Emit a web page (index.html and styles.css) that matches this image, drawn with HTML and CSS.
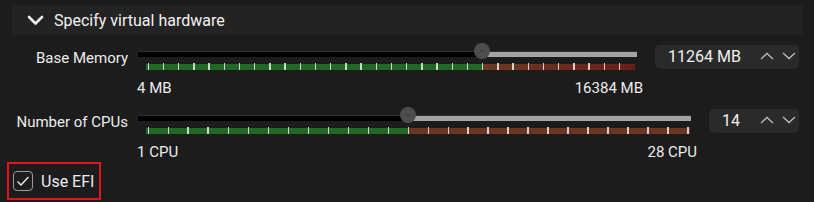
FILE: index.html
```html
<!DOCTYPE html>
<html lang="en">
<head>
    <meta charset="UTF-8">
    <title>Virtual hardware</title>
    <link rel="stylesheet" href="styles.css">
</head>
<body>
    <div class="section-head">
        <svg class="chevron" width="17" height="11" viewBox="0 0 17 11">
            <path d="M2 2 L8.5 8.5 L15 2" fill="none" stroke="#f2f2f2" stroke-width="2.6" stroke-linecap="round" stroke-linejoin="round"/>
        </svg>
        <span>Specify virtual hardware</span>
    </div>

    <div class="setting">
        <label class="setting-label">Base Memory</label>
        <div class="slider slider-mem" style="--pos: 344px">
            <div class="track"></div>
            <div class="thumb"></div>
            <div class="scale"></div>
        </div>
        <div class="spin spin-wide">
            <span class="spin-value">11264 MB</span>
            <span class="spin-arrows">
                <svg width="14" height="8" viewBox="0 0 14 8"><path d="M1 7 L7 1.5 L13 7" fill="none" stroke="#bdbdbd" stroke-width="1.3"/></svg>
                <svg width="14" height="8" viewBox="0 0 14 8"><path d="M1 1 L7 6.5 L13 1" fill="none" stroke="#bdbdbd" stroke-width="1.3"/></svg>
            </span>
        </div>
        <div class="range"><span>4 MB</span><span>16384 MB</span></div>
    </div>

    <div class="setting">
        <label class="setting-label">Number of CPUs</label>
        <div class="slider slider-cpu" style="--pos: 270px">
            <div class="track"></div>
            <div class="thumb"></div>
            <div class="scale"></div>
        </div>
        <div class="spin spin-narrow">
            <span class="spin-value">14</span>
            <span class="spin-arrows">
                <svg width="14" height="8" viewBox="0 0 14 8"><path d="M1 7 L7 1.5 L13 7" fill="none" stroke="#bdbdbd" stroke-width="1.3"/></svg>
                <svg width="14" height="8" viewBox="0 0 14 8"><path d="M1 1 L7 6.5 L13 1" fill="none" stroke="#bdbdbd" stroke-width="1.3"/></svg>
            </span>
        </div>
        <div class="range"><span>1 CPU</span><span>28 CPU</span></div>
    </div>

    <div class="efi">
        <span class="checkbox">
            <svg width="14" height="12" viewBox="0 0 14 12"><path d="M1.5 6.5 L5 10 L12.5 2" fill="none" stroke="#f0f0f0" stroke-width="1.3"/></svg>
        </span>
        <span>Use EFI</span>
    </div>
</body>
</html>
```

FILE: styles.css
```css
body {
    margin: 0;
    background-color: #1c1c1c;
    color: #ececec;
    font-family: Roboto, "Noto Sans", sans-serif;
    font-size: 15px;
}
.section-head {
    display: flex;
    align-items: center;
    gap: 10px;
    height: 30px;
    margin: 5px 11px 0 12px;
    padding-left: 15px;
    background-color: #232323;
    font-size: 16px;
    color: #f2f2f2;
}
.chevron {
    margin-top: 1px;
}
.setting {
    display: grid;
    grid-template-columns: 138px 1fr auto;
    align-items: center;
    margin: 8px 15px 0 0;
}
.setting + .setting {
    margin-top: 9px;
}
.setting-label {
    text-align: right;
    padding-right: 10px;
    padding-top: 3px;
    white-space: nowrap;
}
.slider {
    position: relative;
    height: 27px;
}
.track {
    height: 5px;
    margin-top: 8px;
    background: linear-gradient(90deg, #000 0 var(--pos), #a3a3a3 var(--pos) 100%);
    border-top: 1px solid #2e2e2e;
}
.thumb {
    position: absolute;
    top: 0;
    left: calc(var(--pos) - 8px);
    width: 16px;
    height: 16px;
    border-radius: 50%;
    background: radial-gradient(circle, #404040 0 1px, #4e4e4e 2px);
}
.scale {
    height: 7px;
    margin: 6px 0 0 8px;
    background-repeat: no-repeat;
    background-position: 0 0, 0 bottom;
}
.slider-mem .scale {
    margin-right: 2px;
    background-image:
        repeating-linear-gradient(90deg, transparent 0 1.5px, rgba(235, 235, 225, 0.85) 1.5px 3px, transparent 3px 15.2px),
        linear-gradient(90deg, #1f6a23 0 calc(var(--pos) - 8px), #6c3a22 calc(var(--pos) - 8px), #6a1d17 100%);
    background-size: 476px 7px, 100% 6px;
}
.slider-cpu .scale {
    margin-right: 1px;
    background-image:
        repeating-linear-gradient(90deg, transparent 0 1.5px, rgba(235, 235, 225, 0.85) 1.5px 3px, transparent 3px 20px),
        linear-gradient(90deg, #1f6a23 0 calc(var(--pos) - 8px), #6b3521 calc(var(--pos) - 8px));
    background-size: 546px 7px, 100% 6px;
}
.spin {
    display: flex;
    align-items: center;
    justify-content: space-between;
    height: 23px;
    margin-left: 18px;
    padding: 0 3px 0 13px;
    background-color: #2a2a2a;
    border-bottom: 1px solid #252525;
    border-radius: 5px;
    font-size: 16px;
    color: #f0f0f0;
}
.spin-wide {
    width: 128px;
}
.spin-narrow {
    width: 74px;
}
.spin-value {
    padding-top: 1px;
}
.spin-arrows {
    display: flex;
    gap: 8px;
}
.range {
    grid-column: 2;
    display: flex;
    justify-content: space-between;
    line-height: 20px;
    margin: 8px -6px 0 -1px;
}
.efi {
    display: inline-flex;
    align-items: center;
    gap: 8px;
    height: 34px;
    margin: 0 0 0 7px;
    padding: 0 5px 0 4px;
    border: 2px solid #e0161b;
    font-size: 16px;
}
.checkbox {
    display: flex;
    align-items: center;
    justify-content: center;
    width: 18px;
    height: 18px;
    border: 1px solid #9c9c9c;
    border-radius: 4px;
}
```
